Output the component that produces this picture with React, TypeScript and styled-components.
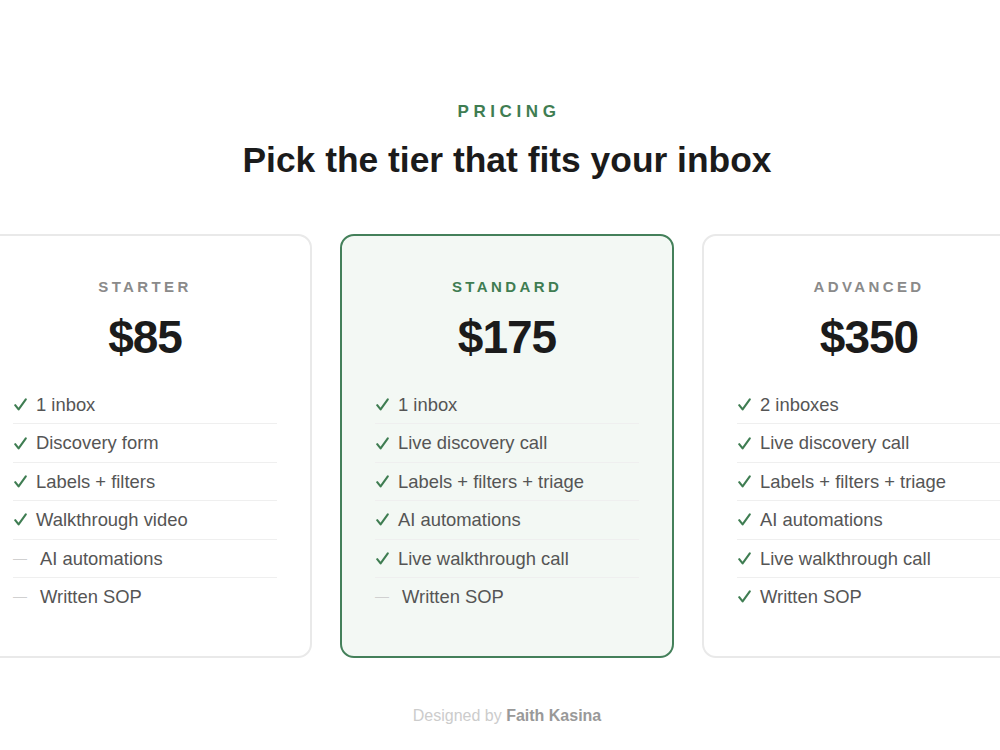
import React from "react";
import styled, { createGlobalStyle } from "styled-components";

const GlobalStyle = createGlobalStyle`
  html, body {
    margin: 0;
    padding: 0;
    background: #ffffff;
    font-family: "Liberation Sans", Arial, sans-serif;
  }
`;

const Page = styled.div`
  width: 1000px;
  height: 750px;
  overflow: hidden;
  display: flex;
  flex-direction: column;
  align-items: center;
  padding: 100px 0 0 14px;
  box-sizing: border-box;
`;

const Eyebrow = styled.p`
  margin: 0;
  color: #3f7d52;
  font-size: 17px;
  font-weight: 700;
  line-height: 24px;
  letter-spacing: 4.6px;
  padding-left: 4px;
`;

const Title = styled.h1`
  margin: 16px 0 0 0;
  color: #1b1b1b;
  font-size: 35.4px;
  font-weight: 700;
  line-height: 40px;
`;

const Tiers = styled.div`
  display: grid;
  grid-template-columns: repeat(3, 334px);
  gap: 28px;
  margin-top: 54px;
  flex-shrink: 0;
`;

const Card = styled.div<{ $featured?: boolean }>`
  box-sizing: border-box;
  height: 424px;
  border: 2px solid ${(p) => (p.$featured ? "#44805a" : "#e9e9e9")};
  border-radius: 14px;
  background: ${(p) => (p.$featured ? "#f3f8f4" : "#ffffff")};
  padding: 41px 33px 0 33px;
  display: flex;
  flex-direction: column;
  align-items: center;
`;

const TierName = styled.p<{ $featured?: boolean }>`
  margin: 0;
  color: ${(p) => (p.$featured ? "#3f7d52" : "#8a8a8a")};
  font-size: 15px;
  font-weight: 700;
  line-height: 20px;
  letter-spacing: 3.4px;
`;

const Price = styled.p`
  margin: 14px 0 0 0;
  color: #1b1b1b;
  font-size: 46px;
  font-weight: 700;
  line-height: 52px;
  letter-spacing: -1px;
`;

const Features = styled.ul`
  list-style: none;
  margin: 23px 0 0 0;
  padding: 0;
  align-self: stretch;
`;

const Feature = styled.li`
  display: flex;
  align-items: center;
  padding: 8px 0;
  line-height: 21.4px;
  font-size: 18.4px;
  color: #555555;
  border-bottom: 1px solid #efefef;

  &:last-child {
    border-bottom: none;
  }
`;

const Mark = styled.span<{ $on: boolean }>`
  display: inline-flex;
  align-items: center;
  flex-shrink: 0;
  width: ${(p) => (p.$on ? "23px" : "27px")};
  padding-left: ${(p) => (p.$on ? "1px" : "0")};
  box-sizing: border-box;
  color: #d0d0d0;
  font-size: 14px;
`;

const Check: React.FC = () => (
  <svg width="13" height="13" viewBox="0 0 13 13" aria-hidden="true">
    <path
      d="M1.2 7.2 L4.6 11.4 L11.8 1.4"
      fill="none"
      stroke="#3f7d52"
      strokeWidth="2.1"
      strokeLinecap="round"
      strokeLinejoin="round"
    />
  </svg>
);

const Credit = styled.p`
  margin: 48px 0 0 0;
  color: #cccccc;
  font-size: 16px;
  line-height: 20px;

  b {
    color: #999999;
    font-weight: 700;
  }
`;

type Tier = {
  name: string;
  price: string;
  featured?: boolean;
  features: [string, boolean][];
};

const tiers: Tier[] = [
  {
    name: "Starter",
    price: "$85",
    features: [
      ["1 inbox", true],
      ["Discovery form", true],
      ["Labels + filters", true],
      ["Walkthrough video", true],
      ["AI automations", false],
      ["Written SOP", false],
    ],
  },
  {
    name: "Standard",
    price: "$175",
    featured: true,
    features: [
      ["1 inbox", true],
      ["Live discovery call", true],
      ["Labels + filters + triage", true],
      ["AI automations", true],
      ["Live walkthrough call", true],
      ["Written SOP", false],
    ],
  },
  {
    name: "Advanced",
    price: "$350",
    features: [
      ["2 inboxes", true],
      ["Live discovery call", true],
      ["Labels + filters + triage", true],
      ["AI automations", true],
      ["Live walkthrough call", true],
      ["Written SOP", true],
    ],
  },
];

const App: React.FC = () => {
  return (
    <>
      <GlobalStyle />
      <Page>
        <Eyebrow>PRICING</Eyebrow>
        <Title>Pick the tier that fits your inbox</Title>

        <Tiers>
          {tiers.map((tier) => (
            <Card key={tier.name} $featured={tier.featured}>
              <TierName $featured={tier.featured}>
                {tier.name.toUpperCase()}
              </TierName>
              <Price>{tier.price}</Price>
              <Features>
                {tier.features.map(([label, on]) => (
                  <Feature key={label}>
                    <Mark $on={on}>{on ? <Check /> : "—"}</Mark>
                    {label}
                  </Feature>
                ))}
              </Features>
            </Card>
          ))}
        </Tiers>

        <Credit>
          Designed by <b>Faith Kasina</b>
        </Credit>
      </Page>
    </>
  );
};

export default App;
